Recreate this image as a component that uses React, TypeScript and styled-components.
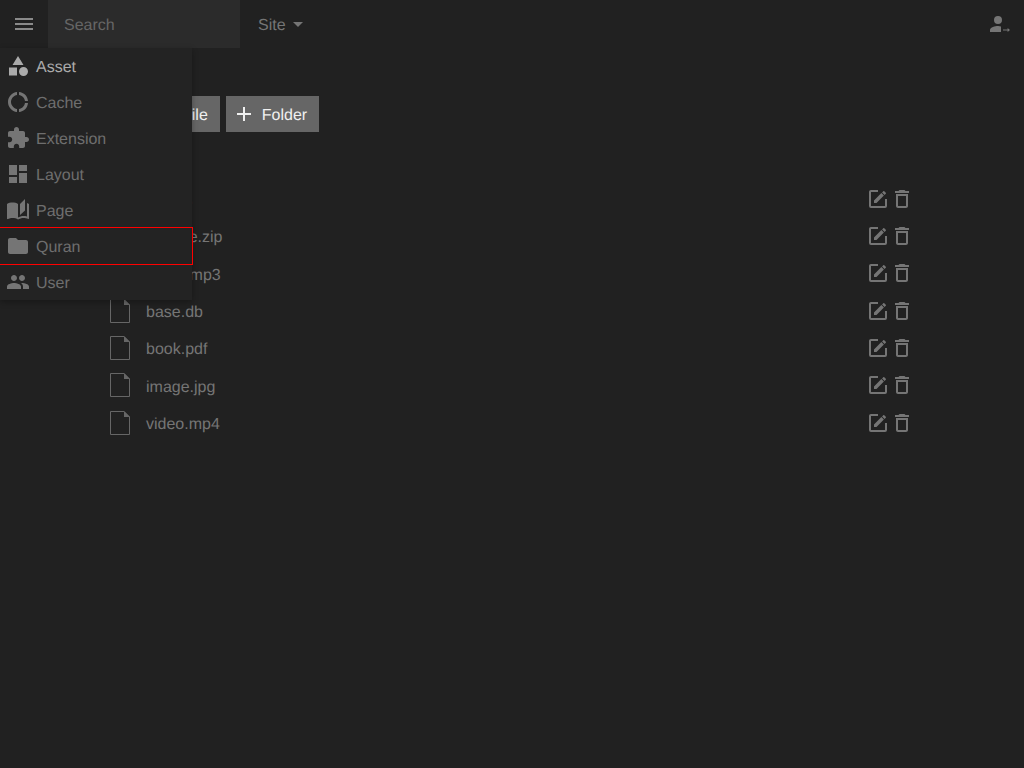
import React from "react";
import styled, { createGlobalStyle } from "styled-components";

const Global = createGlobalStyle`
  html, body { margin: 0; padding: 0; height: 100%; background: #212121; }
  #root { height: 100%; }
  * { box-sizing: border-box; }
`;

const Page = styled.div`
  position: relative;
  width: 100%;
  height: 768px;
  overflow: hidden;
  background: #212121;
  color: #757575;
  font: 16px/24px "Liberation Sans", Arial, sans-serif;
  text-rendering: geometricPrecision;
`;

const Label = styled.span`
  display: block;
  padding-top: 4.5px;
`;

const TopBar = styled.header`
  display: flex;
  align-items: center;
  height: 48px;
`;

const MenuToggle = styled.div`
  width: 48px;
  height: 48px;
  display: flex;
  align-items: center;
  justify-content: center;
  color: #8a8a8a;
`;

const SearchBox = styled.div`
  width: 192px;
  height: 48px;
  padding-left: 16px;
  display: flex;
  align-items: center;
  background: #2b2b2b;
  color: #666;
`;

const SiteSelect = styled.div`
  display: flex;
  align-items: center;
  margin-left: 18px;
  color: #757575;
`;

const UserSlot = styled.div`
  margin-left: auto;
  margin-right: 12px;
  display: flex;
  color: #757575;
`;

const NavMenu = styled.nav`
  position: absolute;
  left: 0;
  top: 48px;
  width: 192px;
  background: #232323;
  box-shadow: 0 2px 6px rgba(0, 0, 0, 0.3);
  z-index: 2;
`;

const NavItem = styled.div<{ $active?: boolean; $focused?: boolean }>`
  height: 36px;
  display: flex;
  align-items: center;
  gap: 6px;
  padding-left: 6px;
  color: ${(p) => (p.$active ? "#ababab" : "#6e6e6e")};
  outline: ${(p) => (p.$focused ? "1px solid #f00" : "none")};
`;

const NavIcon = styled.span<{ $active?: boolean }>`
  display: flex;
  color: ${(p) => (p.$active ? "#ababab" : "#757575")};
`;

const Main = styled.main`
  padding: 48px 110px 0;
`;

const Toolbar = styled.div`
  display: flex;
  gap: 6px;
  padding-left: 36px;
`;

const ActionButton = styled.div`
  height: 36px;
  display: flex;
  align-items: center;
  gap: 6px;
  padding: 0 12px 0 6px;
  background: #666;
  color: #f0f0f0;
`;

const FileList = styled.div`
  margin-top: 48px;
  width: 804px;
`;

const FileRow = styled.div`
  height: 37.33px;
  display: flex;
  align-items: center;
  gap: 16px;
  color: #757575;
`;

const FileName = styled(Label)`
  flex: 1;
`;

const RowActions = styled.div`
  display: flex;
  color: #757575;
`;

const Icon = ({ d, size = 24 }: { d: string; size?: number }) => (
  <svg width={size} height={size} viewBox="0 0 24 24" fill="currentColor">
    <path d={d} />
  </svg>
);

const paths = {
  menu: "M3 18h18v-2H3v2zm0-5h18v-2H3v2zm0-7v2h18V6H3z",
  caret: "M7 10l5 5 5-5z",
  plus: "M19 13h-6v6h-2v-6H5v-2h6V5h2v6h6v2z",
  asset: "M12 2l-5.5 9h11zM13 17.5a4.5 4.5 0 1 0 9 0 4.5 4.5 0 1 0-9 0zM3 13.5h8v8H3z",
  cache:
    "M11 5.08V2c-5 .5-9 4.81-9 10s4 9.5 9 10v-3.08c-3-.48-6-3.4-6-6.92s3-6.44 6-6.92zM18.97 11H22c-.47-5-4-8.53-9-9v3.08C16 5.51 18.54 8 18.97 11zM13 18.92V22c5-.47 8.53-4 9-9h-3.03c-.43 3-2.97 5.49-5.97 5.92z",
  extension:
    "M20.5 11H19V7c0-1.1-.9-2-2-2h-4V3.5C13 2.12 11.88 1 10.5 1S8 2.12 8 3.5V5H4c-1.1 0-1.99.9-1.99 2v3.8H3.5c1.49 0 2.7 1.21 2.7 2.7s-1.21 2.7-2.7 2.7H2V20c0 1.1.9 2 2 2h3.8v-1.5c0-1.49 1.21-2.7 2.7-2.7 1.49 0 2.7 1.21 2.7 2.7V22H17c1.1 0 2-.9 2-2v-4h1.5c1.38 0 2.5-1.12 2.5-2.5S21.88 11 20.5 11z",
  layout: "M3 13h8V3H3v10zm0 8h8v-6H3v6zm10 0h8V11h-8v10zm0-18v6h8V3h-8z",
  page:
    "M19 1l-5 5v11l5-4.5V1zM1 6v14.65c0 .25.25.5.5.5.1 0 .15-.05.25-.05C3.1 20.45 5.05 20 6.5 20c1.95 0 4.05.4 5.5 1.5V6c-1.45-1.1-3.55-1.5-5.5-1.5S2.45 4.9 1 6zm22 13.5V6c-.6-.45-1.25-.75-2-1v13.5c-1.1-.35-2.3-.5-3.5-.5-1.7 0-4.15.65-5.5 1.5v2c1.35-.85 3.8-1.5 5.5-1.5 1.65 0 3.35.3 4.75 1.05.1.05.15.05.25.05.25 0 .5-.25.5-.5v-1.1z",
  folder:
    "M10 4H4c-1.1 0-1.99.9-1.99 2L2 18c0 1.1.9 2 2 2h16c1.1 0 2-.9 2-2V8c0-1.1-.9-2-2-2h-8l-2-2z",
  user:
    "M16 11c1.66 0 2.99-1.34 2.99-3S17.66 5 16 5c-1.66 0-3 1.34-3 3s1.34 3 3 3zm-8 0c1.66 0 2.99-1.34 2.99-3S9.66 5 8 5C6.34 5 5 6.34 5 8s1.34 3 3 3zm0 2c-2.33 0-7 1.17-7 3.5V19h14v-2.5c0-2.33-4.67-3.5-7-3.5zm8 0c-.29 0-.62.02-.97.05 1.16.84 1.97 1.97 1.97 3.45V19h6v-2.5c0-2.33-4.67-3.5-7-3.5z",
  edit:
    "M5 3C3.89 3 3 3.89 3 5v14a2 2 0 0 0 2 2h14a2 2 0 0 0 2-2v-7h-2v7H5V5h7V3H5zM17.78 4c-.17 0-.35.07-.48.2l-1.22 1.21 2.5 2.5 1.22-1.21c.26-.26.26-.7 0-.95L18.25 4.2c-.13-.13-.3-.2-.47-.2zM15.37 6.12L8 13.5V16h2.5l7.37-7.38-2.5-2.5z",
  trash:
    "M6 19c0 1.1.9 2 2 2h8c1.1 0 2-.9 2-2V7H6v12zM8 9h8v10H8V9zm7.5-5l-1-1h-5l-1 1H5v2h14V4z",
  signIn:
    "M10 4a4 4 0 1 0 0 8 4 4 0 1 0 0-8zM2 20v-2c0-2.7 5.3-4 8-4 1.2 0 2.2.2 3 .5V20H2zM15 17.4h4.6V16l2.4 2-2.4 2v-1.4H15z",
};

const FileIcon = () => (
  <svg width="20" height="24" viewBox="0 0 20 24">
    <path d="M.5.5H14L19.5 6V23.5H.5z" fill="none" stroke="#666" />
    <path d="M14 0L20 6H14z" fill="#666" />
  </svg>
);

const navItems = [
  { label: "Asset", icon: paths.asset, active: true },
  { label: "Cache", icon: paths.cache },
  { label: "Extension", icon: paths.extension },
  { label: "Layout", icon: paths.layout },
  { label: "Page", icon: paths.page },
  { label: "Quran", icon: paths.folder, focused: true },
  { label: "User", icon: paths.user },
];

const files = [
  "assets",
  "archive.zip",
  "audio.mp3",
  "base.db",
  "book.pdf",
  "image.jpg",
  "video.mp4",
];

export default function App() {
  return (
    <Page>
      <Global />
      <TopBar>
        <MenuToggle>
          <Icon d={paths.menu} />
        </MenuToggle>
        <SearchBox>
          <Label>Search</Label>
        </SearchBox>
        <SiteSelect>
          <Label>Site</Label>
          <Icon d={paths.caret} />
        </SiteSelect>
        <UserSlot>
          <Icon d={paths.signIn} />
        </UserSlot>
      </TopBar>
      <NavMenu>
        {navItems.map((item) => (
          <NavItem key={item.label} $active={item.active} $focused={item.focused}>
            <NavIcon $active={item.active}>
              <Icon d={item.icon} />
            </NavIcon>
            <Label>{item.label}</Label>
          </NavItem>
        ))}
      </NavMenu>
      <Main>
        <Toolbar>
          <ActionButton>
            <Icon d={paths.plus} />
            <Label>File</Label>
          </ActionButton>
          <ActionButton>
            <Icon d={paths.plus} />
            <Label>Folder</Label>
          </ActionButton>
        </Toolbar>
        <FileList>
          {files.map((name) => (
            <FileRow key={name}>
              <FileIcon />
              <FileName>{name}</FileName>
              <RowActions>
                <Icon d={paths.edit} />
                <Icon d={paths.trash} />
              </RowActions>
            </FileRow>
          ))}
        </FileList>
      </Main>
    </Page>
  );
}
